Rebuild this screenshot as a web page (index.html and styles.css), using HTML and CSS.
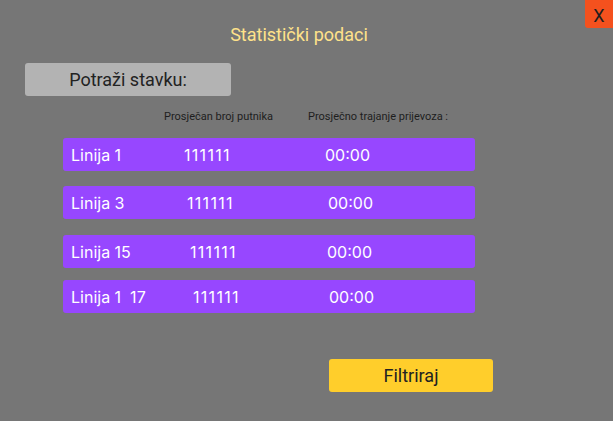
FILE: index.html
```html
<!DOCTYPE html>
<html>
<head>
<meta charset="utf-8">
<link rel="stylesheet" href="styles.css">
</head>
<body>
<div class="screen">
  <button class="close">X</button>
  <h1 class="title">Statistički podaci</h1>
  <div class="search">Potraži stavku:</div>
  <div class="headers">
    <span class="h1">Prosječan broj putnika</span>
    <span class="h2">Prosječno trajanje prijevoza :</span>
  </div>
  <div class="rows">
    <div class="row r1"><span class="name">Linija 1</span><span class="num">111111</span><span class="time">00:00</span></div>
    <div class="row r2"><span class="name">Linija 3</span><span class="num">111111</span><span class="time">00:00</span></div>
    <div class="row r3"><span class="name">Linija 15</span><span class="num">111111</span><span class="time">00:00</span></div>
    <div class="row r4"><span class="name">Linija 1&nbsp;&nbsp;17</span><span class="num">111111</span><span class="time">00:00</span></div>
  </div>
  <div class="actions">
    <button class="filter">Filtriraj</button>
  </div>
</div>
</body>
</html>
```
FILE: styles.css
```css
html, body {
  margin: 0;
  padding: 0;
  background: #767676;
  width: 613px;
  height: 421px;
  overflow: hidden;
}
.screen {
  position: relative;
  width: 613px;
  height: 421px;
  display: flex;
  flex-direction: column;
  font-family: Roboto, "Liberation Sans", sans-serif;
}
.close {
  position: absolute;
  top: 0;
  right: 0;
  width: 28px;
  height: 28px;
  border: none;
  background: #F4511E;
  border-bottom-left-radius: 3px;
  color: #1e1e1e;
  font-family: Roboto, sans-serif;
  font-size: 18px;
  padding: 4px 0 0 0;
  line-height: 20px;
}
.title {
  margin: 25px 0 0 0;
  font-size: 18px;
  font-weight: 400;
  line-height: 20px;
  color: #FFE28A;
  text-align: center;
  padding-right: 15px;
}
.search {
  margin: 18px 0 0 25px;
  width: 206px;
  height: 33px;
  background: #B3B3B3;
  border-radius: 3px;
  color: #222;
  font-size: 18px;
  line-height: 33px;
  text-align: center;
}
.headers {
  margin: 14px 0 0 164px;
  display: flex;
  font-size: 11px;
  line-height: 13px;
  color: #1e1e1e;
}
.h1 { width: 144px; }
.rows {
  margin: 15px 0 0 63px;
  width: 412px;
  display: flex;
  flex-direction: column;
}
.row {
  height: 33px;
  background: #9747FF;
  border-radius: 3px;
  display: flex;
  align-items: center;
  padding-left: 8px;
  color: #fff;
  font-family: Inter, "Noto Sans", sans-serif;
  font-size: 16px;
}
.num { letter-spacing: 1.3px; }
.r2 { margin-top: 15px; }
.r3 { margin-top: 16px; }
.r4 { margin-top: 12px; }
.name { width: 113px; }
.num { width: 141px; }
.r2 .name { width: 116px; }
.r3 .name { width: 119px; }
.r3 .num { width: 137px; }
.r4 .name { width: 122px; }
.r4 .num { width: 136px; }
.actions {
  margin: 46px 0 0 329px;
}
.filter {
  width: 164px;
  height: 33px;
  border: none;
  background: #FFCE2B;
  border-radius: 3px;
  color: #222;
  font-family: Roboto, "Liberation Sans", sans-serif;
  font-size: 18px;
  padding: 0;
}
```
